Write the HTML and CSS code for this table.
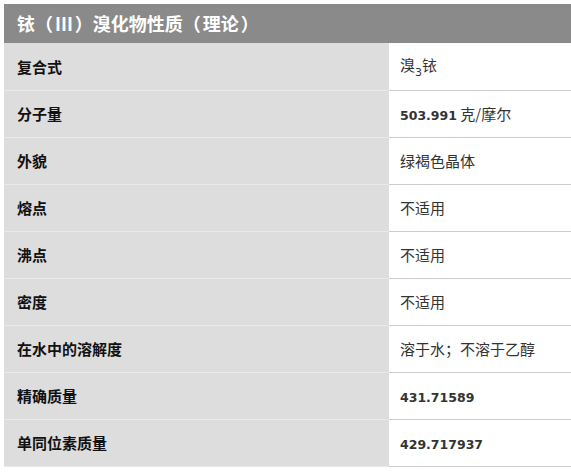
FILE: index.html
```html
<!DOCTYPE html>
<html lang="zh">
<head>
<meta charset="utf-8">
<link rel="stylesheet" href="styles.css">
</head>
<body>
<div class="panel">
  <div class="title">铱（<span class="pin">III</span>）溴化物性质（<span class="pin">理论</span>）</div>
  <table class="props">
    <tr><th>复合式</th><td>溴<sub>3</sub>铱</td></tr>
    <tr><th>分子量</th><td><span class="num">503.991</span> 克/摩尔</td></tr>
    <tr><th>外貌</th><td>绿褐色晶体</td></tr>
    <tr><th>熔点</th><td>不适用</td></tr>
    <tr><th>沸点</th><td>不适用</td></tr>
    <tr><th>密度</th><td>不适用</td></tr>
    <tr><th>在水中的溶解度</th><td>溶于水；不溶于乙醇</td></tr>
    <tr><th>精确质量</th><td><span class="num">431.71589</span></td></tr>
    <tr><th>单同位素质量</th><td><span class="num">429.717937</span></td></tr>
  </table>
</div>
</body>
</html>
```

FILE: styles.css
```css
html, body {
  margin: 0;
  padding: 0;
  background: #ffffff;
  overflow: hidden;
}
body {
  padding: 4px 0 0 4px;
  font-family: "Noto Sans CJK SC", "DejaVu Sans", sans-serif;
}
.panel {
  width: 567px;
}
.title {
  height: 39px;
  line-height: 39px;
  background: #8a8a8a;
  color: #ffffff;
  font-weight: bold;
  font-size: 18px;
  padding-left: 13px;
  white-space: nowrap;
}
.pin {
  padding: 0 2px;
}
.props {
  width: 567px;
  border-collapse: collapse;
  border-spacing: 0;
}
.props tr {
  height: 47px;
}
.props th {
  width: 372px;
  background: #dddddd;
  text-align: left;
  font-weight: bold;
  font-size: 15px;
  color: #111111;
  padding: 0 0 0 13px;
  vertical-align: middle;
  border-bottom: 1px solid #e9e9e9;
}
.props td {
  background: #ffffff;
  font-size: 15px;
  color: #333333;
  padding: 0 0 0 11px;
  vertical-align: middle;
  border-bottom: 1px solid #cccccc;
}
.props sub {
  font-family: "DejaVu Sans", sans-serif;
  font-size: 11px;
  vertical-align: -5px;
  line-height: 1;
}
.num {
  font-family: "DejaVu Sans", sans-serif;
  font-weight: bold;
  font-size: 12.5px;
  color: #333333;
}
```
